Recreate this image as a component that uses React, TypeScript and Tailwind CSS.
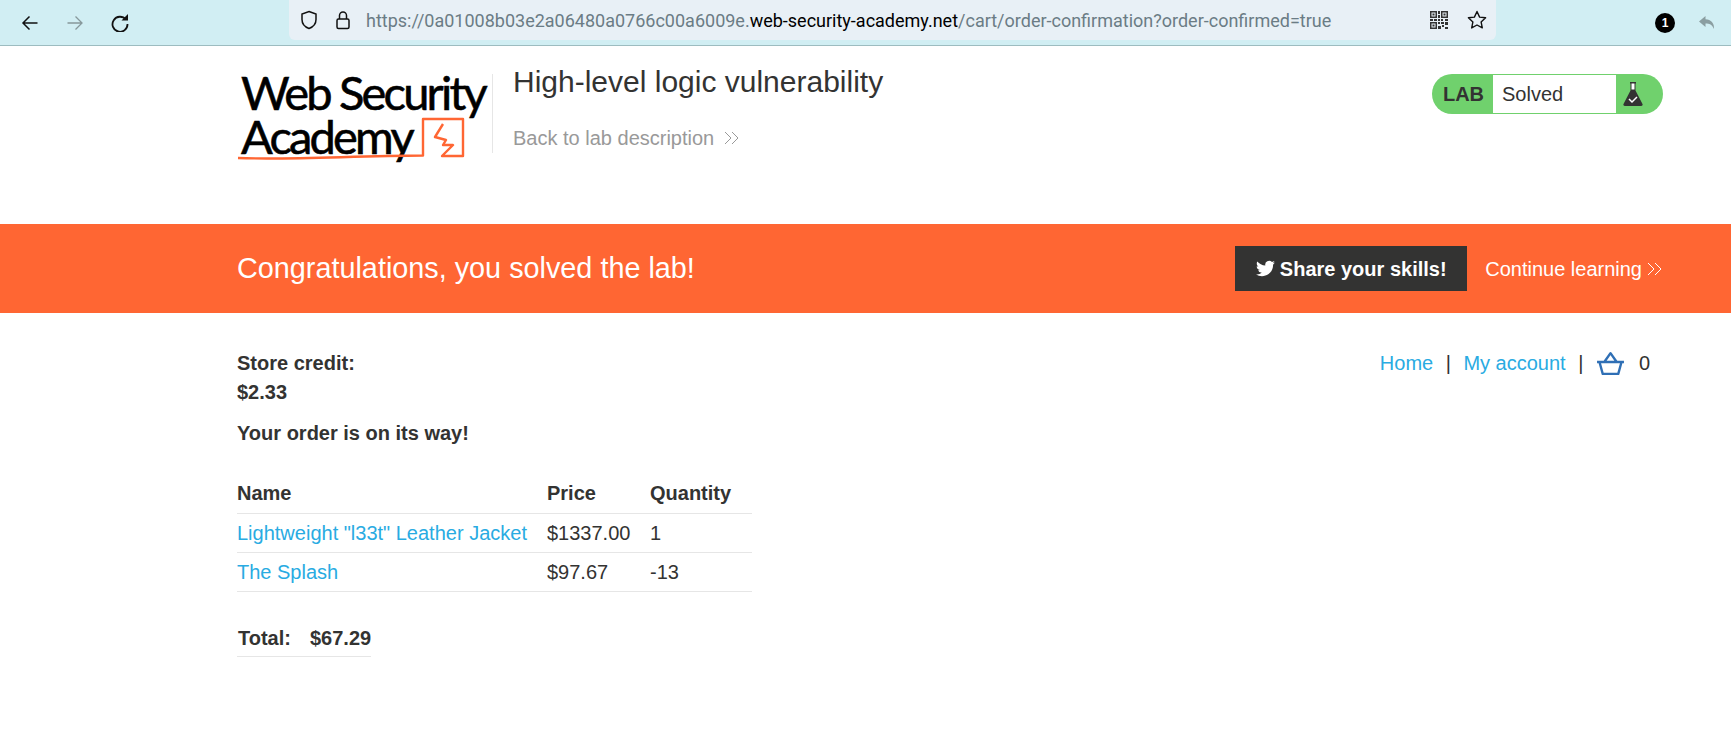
import React from 'react';

const sans = 'font-["Liberation_Sans",Arial,sans-serif]';

function Chevrons({ className }: { className?: string }) {
  return (
    <svg viewBox="0 0 16 14" className={className} fill="none" stroke="currentColor" strokeWidth="1">
      <path d="M1 1l6 6-6 6M8 1l6 6-6 6" />
    </svg>
  );
}

function BrowserBar() {
  return (
    <div className="h-[46px] bg-[#d1eef3] border-b border-[#9dbcc0] flex items-start shrink-0">
      <div className="w-[289px] h-[45px] flex items-center shrink-0">
        <svg viewBox="0 0 18 18" className="w-[18px] h-[18px] ml-[21px]" fill="none" stroke="#111" strokeWidth="1.500">
          <path d="M16.500 9H2M8.500 2.500L2 9l6.500 6.500" />
        </svg>
        <svg viewBox="0 0 18 18" className="w-[18px] h-[18px] ml-[27px]" fill="none" stroke="#87989b" strokeWidth="1.300">
          <path d="M1.500 9H16M9.500 2.500L16 9l-6.500 6.500" />
        </svg>
        <svg viewBox="0 0 18 18" className="w-[18px] h-[18px] ml-[27px]" fill="none" stroke="#111" strokeWidth="1.800">
          <path d="M14.800 5.500A7.500 7.500 0 1 0 16.500 10" />
          <path d="M10.500 6.500h6.500V0z" fill="#111" stroke="none" />
        </svg>
      </div>
      <div className="w-[1207px] h-[40px] bg-[#e8f0f6] rounded-b-[6px] flex items-center shrink-0">
        <svg viewBox="0 0 18 20" className="w-[18px] h-[20px] ml-[11px]" fill="none" stroke="#111" strokeWidth="1.500">
          <path d="M9 1.500l7 2.500v5.500c0 4-3 7.500-7 9-4-1.500-7-5-7-9V4z" />
        </svg>
        <svg viewBox="0 0 14 20" className="w-[14px] h-[20px] ml-[18px]" fill="none" stroke="#111" strokeWidth="1.500">
          <rect x="1" y="9" width="12" height="9.500" rx="1.500" />
          <path d="M3.500 9V5.500a3.500 3.500 0 0 1 7 0V9" />
        </svg>
        <div className="ml-[16px] text-[18px] whitespace-nowrap text-[#6b7c85] font-['Roboto',sans-serif] w-[1054px] overflow-hidden">
          https://0a01008b03e2a06480a0766c00a6009e.<span className="text-black">web-security-academy.net</span>/cart/order-confirmation?order-confirmed=true
        </div>
        <svg viewBox="0 0 18 18" className="w-[18px] h-[18px] ml-[10px]" fill="#333">
          <path fillRule="evenodd" d="M0 0h7v7H0zM1.500 1.500v4h4v-4zM11 0h7v7h-7zM12.500 1.500v4h4v-4zM0 11h7v7H0zM1.500 12.500v4h4v-4z" />
          <path d="M2.500 2.500h2v2h-2zM13.500 2.500h2v2h-2zM2.500 13.500h2v2h-2zM8 0h2v3H8zM8 4h2v3H8zM0 8h3v2H0zM4 8h3v2H4zM8 8h2v2H8zM11 8h2v2h-2zM15 8h3v2h-3zM8 11h2v2H8zM11 11h3v2h-3zM15 11h3v3h-3zM8 15h3v3H8zM12 14h2v2h-2zM15 16h3v2h-3z" />
        </svg>
        <svg viewBox="0 0 20 20" className="w-[20px] h-[20px] ml-[19px]" fill="none" stroke="#111" strokeWidth="1.400" strokeLinejoin="round">
          <path d="M10 1.500l2.600 5.600 6 .7-4.500 4.100 1.200 6L10 15l-5.300 2.900 1.200-6L1.400 7.800l6-.7z" />
        </svg>
      </div>
      <div className="flex-1 h-[45px] flex items-center">
        <div className="w-[20px] h-[20px] ml-[159px] rounded-full bg-black text-white text-[12px] font-bold flex items-center justify-center font-['Liberation_Sans',sans-serif]">1</div>
        <svg viewBox="0 0 18 16" className="w-[18px] h-[16px] ml-[23px]" fill="#8b9ea1">
          <path d="M7.500 1L1 6.500 7.500 12V8.500c4 0 6.500 1 8.500 5.500.5-6-3-9.500-8.500-9.800z" />
        </svg>
      </div>
    </div>
  );
}

function Logo() {
  return (
    <div className="relative w-[248px] h-[92px] shrink-0 font-['Lato',sans-serif] text-black">
      <div className="ml-[1px] -mt-[4px] text-[47px] leading-[44px] tracking-[-2.800px] [-webkit-text-stroke:0.6px_black] whitespace-nowrap">
        <div>Web Security</div>
        <div>Academy</div>
      </div>
      <svg viewBox="0 0 248 92" className="absolute inset-0 w-[248px] h-[92px] overflow-visible" fill="none" stroke="#ff6633" strokeWidth="2.400">
        <path d="M-2 84C50 86 110 82 183 81.500V45h40v37h-21l11-11h-10l3-5-11-3 8-13" strokeLinejoin="round" />
      </svg>
    </div>
  );
}

export default function App() {
  return (
    <div className={`w-[1731px] h-[744px] bg-white flex flex-col overflow-hidden text-[20px] text-[#333332] ${sans}`}>
      <BrowserBar />
      <header className="h-[178px] shrink-0 pl-[240px] pr-[68px] pt-[28px] flex items-start">
        <Logo />
        <div className="w-px h-[79px] bg-[#e6e6e6] ml-[4px] shrink-0" />
        <div className="ml-[20px] flex-1">
          <h2 className="text-[30px] leading-[36px] -mt-[10px]">High-level logic vulnerability</h2>
          <a className="mt-[26px] flex items-center text-[#999999] leading-[24px]">
            Back to lab description
            <Chevrons className="w-[16px] h-[14px] ml-[10px]" />
          </a>
        </div>
        <div className="w-[231px] h-[40px] rounded-[20px] bg-[#70d16d] flex items-center overflow-hidden shrink-0">
          <span className="w-[61px] text-center font-bold text-[20px] pl-[2px] text-[#333332]">LAB</span>
          <span className="w-[123px] h-[38px] bg-white flex items-center pl-[9px]">Solved</span>
          <svg viewBox="0 0 20 26" className="w-[20px] h-[26px] ml-[7px]">
            <path d="M7 1h6v1.500h-.5v7L19.500 23a1.500 1.500 0 0 1-1.300 2H1.800A1.500 1.500 0 0 1 .5 23L7.500 9.500v-7H7z" fill="#333332" />
            <path d="M8.500 2.500h3v6h-3z" fill="#ffffff" />
            <path d="M6 18l3 3 5-5" fill="none" stroke="#ffffff" strokeWidth="1.500" />
          </svg>
        </div>
      </header>

      <section className="h-[89px] shrink-0 bg-[#ff6633] pl-[237px] pr-[68px] flex items-center text-white">
        <h4 className="flex-1 text-[28.800px]">Congratulations, you solved the lab!</h4>
        <a className="w-[232px] h-[45px] bg-[#333332] flex items-center justify-center font-bold">
          <svg viewBox="0 0 24 24" className="w-[19px] h-[19px] mr-[5px]" fill="#ffffff">
            <path d="M23.950 4.570a10 10 0 0 1-2.820.77 4.960 4.960 0 0 0 2.160-2.720c-.95.550-2 .96-3.130 1.190a4.920 4.920 0 0 0-8.380 4.480C7.690 8.090 4.070 6.130 1.640 3.160a4.820 4.820 0 0 0-.67 2.480c0 1.710.87 3.210 2.190 4.100a4.900 4.900 0 0 1-2.230-.62v.06a4.920 4.920 0 0 0 3.950 4.830 5 5 0 0 1-2.210.08 4.940 4.940 0 0 0 4.610 3.420A9.870 9.870 0 0 1 0 19.540a14 14 0 0 0 7.560 2.210c9.050 0 14-7.500 14-13.980 0-.21 0-.42-.02-.63a9.940 9.940 0 0 0 2.410-2.570z" />
          </svg>
          Share your skills!
        </a>
        <a className="ml-[18px] flex items-center">
          Continue learning
          <Chevrons className="w-[16px] h-[14px] ml-[5px]" />
        </a>
      </section>

      <main className="pl-[237px] pr-[81px] pt-[36px] flex items-start justify-between">
        <div>
          <p className="font-bold leading-[28.500px]">
            Store credit:
            <br />
            $2.33
          </p>
          <p className="font-bold mt-[13px] leading-[28px]">Your order is on its way!</p>
          <table className="mt-[27px] w-[515px] border-collapse text-left">
            <thead>
              <tr className="border-b border-[#e6e6e6] h-[39px]">
                <th className="font-bold w-[310px]">Name</th>
                <th className="font-bold w-[103px]">Price</th>
                <th className="font-bold">Quantity</th>
              </tr>
            </thead>
            <tbody>
              <tr className="border-b border-[#e6e6e6] h-[39px]">
                <td><a className="text-[#29abe2]">Lightweight "l33t" Leather Jacket</a></td>
                <td>$1337.00</td>
                <td>1</td>
              </tr>
              <tr className="border-b border-[#e6e6e6] h-[39px]">
                <td><a className="text-[#29abe2]">The Splash</a></td>
                <td>$97.67</td>
                <td>-13</td>
              </tr>
            </tbody>
          </table>
          <div className="mt-[22px] w-[134px] h-[43px] border-b border-[#e6e6e6] flex items-center font-bold pl-[1px] pt-[7px]">
            <span>Total:</span>
            <span className="ml-[19px]">$67.29</span>
          </div>
        </div>
        <nav className="flex items-center h-[24px] mt-[2px]">
          <a className="text-[#29abe2]">Home</a>
          <span className="mx-[12.500px] text-[#333332]">|</span>
          <a className="text-[#29abe2]">My account</a>
          <span className="mx-[12.500px] text-[#333332]">|</span>
          <svg viewBox="0 0 28 24" className="w-[29px] h-[25px]" fill="none" stroke="#2f6fb5" strokeWidth="2.300">
            <path d="M1 10.500h26M3.500 11l3 11h15l3-11M8 10.500L14 2l6 8.500" strokeLinejoin="round" />
          </svg>
          <span className="ml-[14px]">0</span>
        </nav>
      </main>
    </div>
  );
}
